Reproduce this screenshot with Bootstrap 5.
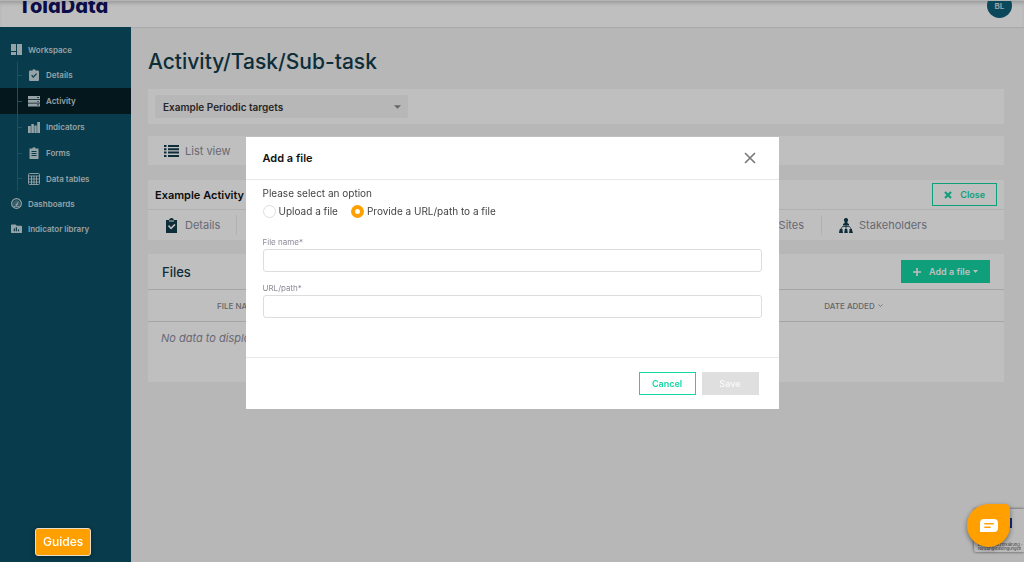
<!DOCTYPE html>
<html lang="en">
<head>
<meta charset="utf-8">
<meta name="viewport" content="width=device-width, initial-scale=1">
<title>TolaData – Activity</title>
<link href="https://cdn.jsdelivr.net/npm/bootstrap@5.3.0/dist/css/bootstrap.min.css" rel="stylesheet">
<style>
:root { --ink:#123c4b; --green:#14d6a5; --orange:#ffa000; --muted:#8c8c9b; }
body { font-family:Inter,"Liberation Sans",sans-serif; font-size:10px; line-height:16px; background:#f4f4f4; color:#222; }
svg { display:block; flex:none; fill:currentColor; }
a { text-decoration:none; color:inherit; }

/* top bar */
.topbar { height:27px; padding:0 12px 0 18px; background:#fff; border-top:1px solid #eef1f0; box-shadow:inset 0 4px 4px -2px #0003, 0 0 2px #0003; overflow:hidden; }
.brand { font-size:20px; font-weight:800; line-height:26px; color:#0f1060; font-feature-settings:"cv11"; margin-top:-8px; }
.avatar { width:25px; height:25px; margin-top:-8px; background:#10617a; font-size:8px; font-weight:600; color:#d5e4ea; }

/* sidebar */
.sidebar { width:131px; background:#0b4f65; color:#c9dade; font-size:8px; font-weight:600; padding-top:10px; }
.side-link { height:25px; padding-left:11px; gap:6px; }
.side-sub { position:relative; }
.side-sub .side-link { height:26px; padding-left:28px; }
.side-sub .side-link:last-child { height:25px; }
.side-sub::before { content:""; position:absolute; left:17px; top:0; bottom:0; width:1px; background:#2b6a7d; }
.side-sub .side-link::before { content:""; position:absolute; left:17px; width:5px; height:1px; background:#2b6a7d; }
.side-link.current { background:#041f27; }

/* content */
.content { padding:23px 20px 0 17px; min-width:0; }
.page-title { font-size:21px; line-height:24px; font-weight:500; color:var(--ink); margin-bottom:15px; }
.panel { background:#fff; }
.select-panel { padding:6px 7px; }
.target-select { width:253px; height:23px; border:0; border-radius:3px; background-color:#f4f4f4; font-size:10px; line-height:16px; font-weight:600; color:#333; padding:0 24px 0 8px;
 background-image:url("data:image/svg+xml,%3Csvg xmlns='http://www.w3.org/2000/svg' viewBox='0 0 8 4'%3E%3Cpath fill='%23888' d='M0 0h8L4 4z'/%3E%3C/svg%3E"); background-size:7px 4px; background-position:right 7px center; }
.view-row { height:29px; margin:12px 0 15px; }
.tab-link { font-size:11px; color:var(--muted); gap:6px; }
.tab-link svg { color:var(--ink); }
.section-panel { margin-bottom:14px; }
.section-row { height:29px; padding:0 7px; }
.section-title { font-size:11px; line-height:16px; color:#111; }
.tabs-row { height:31px; border-top:1px solid #ececec; }
.tab-rule { width:1px; height:20px; background:#ececec; }
.right-tabs { gap:17px; padding-right:77px; }
.btn { border-radius:0; font-size:9px; line-height:14px; font-weight:600; height:23px; padding:0 11px; }
.btn-line { border:1px solid var(--green); color:var(--green); background:transparent; }
.btn-fill { background:var(--green); color:#fff; }
.files-head { height:35px; padding:0 14px; }
.files-title { font-size:13px; line-height:20px; font-weight:500; color:var(--ink); }
.files-table { font-size:8px; font-weight:500; color:#888; margin:0; --bs-table-bg:transparent; }
.files-table th { height:32px; font-weight:500; padding:0; border-top:1px solid #ddd; border-bottom:1px solid #ddd; }
.files-table .col-name { width:79%; padding-left:69px; }
.files-table td { height:60px; padding:8px 13px; border:0; font-size:11px; font-style:italic; font-weight:400; color:var(--muted); }
.sort, .add-text { gap:3px; }

/* dialog */
.modal-backdrop.soft { opacity:.25; }
.modal-dialog.file-dialog { max-width:533px; margin:137px auto 0; }
.file-dialog .modal-content { border:0; border-radius:0; }
.file-dialog .modal-header { height:43px; padding:0 23px 0 17px; border-color:#e8e8e8; border-radius:0; }
.file-dialog .modal-title { font-size:11px; line-height:16px; color:#111; font-weight:600; }
.file-dialog .modal-body { padding:5px 17px 39px; color:#444; }
.file-dialog .modal-footer { height:52px; padding:0 20px 0 17px; gap:6px; border-color:#e8e8e8; }
.file-dialog .modal-footer > * { margin:0; width:57px; padding:0; }
.close-x { border:0; background:none; padding:0; color:#777; }
.options { gap:13px; margin-bottom:14px; }
.option { gap:3px; line-height:20px; }
.option input { appearance:none; width:13px; height:13px; margin:0; border:1px solid #ddd; border-radius:50%; background:#fff; }
.option input:checked { border:4px solid var(--orange); }
.field-group + .field-group { margin-top:9px; }
.field-label { display:block; font-size:8px; line-height:14px; color:var(--muted); }
.field { height:23px; border:1px solid #ddd; border-radius:3px; font-size:10px; padding:2px 8px; }
.btn-off:disabled { background:#dfdfdf; color:#f7f7f7; border:0; opacity:1; }

/* floating items */
.guides { position:fixed; left:35px; bottom:6px; z-index:1070; height:28px; padding:0 7px; border:1px solid #e8dccb; border-radius:3px; background:var(--orange); color:#fff; font-size:12px; font-weight:500; box-shadow:0 1px 4px #0006; }
.chat { position:fixed; right:14px; bottom:15px; z-index:1070; width:43px; height:43px; border:0; border-radius:50% 5px 50% 50%; background:var(--orange); color:#fff; box-shadow:0 2px 5px #0007; }
.captcha { position:fixed; right:0; bottom:10px; width:50px; height:43px; background:#f9f9f9; border-radius:2px 0 0 2px; box-shadow:0 0 3px #555; font-size:4px; line-height:4px; color:#555; padding:34px 0 0 4px; white-space:nowrap; }
.captcha::before { content:""; position:absolute; right:12px; top:9px; width:4px; height:10px; background:#1c3aa9; }
</style>
</head>
<body>
<div class="min-vh-100 d-flex flex-column">
<header class="topbar d-flex justify-content-between align-items-start">
  <a href="#" class="brand">TolaData</a>
  <div class="avatar rounded-circle d-flex align-items-center justify-content-center">BL</div>
</header>
<div class="d-flex flex-grow-1">
  <nav class="sidebar flex-shrink-0" aria-label="Workspace">
    <a href="#" class="side-link d-flex align-items-center"><svg width="11" height="11" viewBox="0 0 11 11"><path d="M0 0h5v7H0zM0 8h5v3H0zM6 0h5v11H6z"/></svg>Workspace</a>
    <div class="side-sub">
      <a href="#" class="side-link d-flex align-items-center"><svg width="12" height="12" viewBox="0 0 12 12"><path fill-rule="evenodd" d="M2 1.500h2.300a1.800 1.800 0 0 1 3.400 0H10q1 0 1 1V11q0 1-1 1H2q-1 0-1-1V2.500q0-1 1-1zM3.200 6.500l2 2.400L9 5l-.8-.8-3 3-1.100-1.500z"/></svg>Details</a>
      <a href="#" class="side-link current d-flex align-items-center" aria-current="page"><svg width="12" height="12" viewBox="0 0 12 12"><path fill-rule="evenodd" d="M0 1h12v3H0zM0 4.700h12v3H0zM0 8.400h12v3H0zM9 2.200v.7h2v-.7zM9 5.900v.7h2v-.7zM9 9.600v.7h2v-.7z"/></svg>Activity</a>
      <a href="#" class="side-link d-flex align-items-center"><svg width="12" height="12" viewBox="0 0 12 12"><path d="M0 5h2.800v7H0zM3.300 3h2.600v9H3.300zM6.400 4.500h2.300V12H6.400zM9.200 1H12v11H9.200z"/></svg>Indicators</a>
      <a href="#" class="side-link d-flex align-items-center"><svg width="12" height="12" viewBox="0 0 12 12"><path fill-rule="evenodd" d="M2 1.500h2.300a1.800 1.800 0 0 1 3.400 0H10.500V12h-9V1.500zM3.500 4v1h5V4zM3.500 6v1h5V6zM3.500 8v1h5V8z"/></svg>Forms</a>
      <a href="#" class="side-link d-flex align-items-center"><svg width="12" height="12" viewBox="0 0 12 12"><path fill="none" stroke="currentColor" d="M1.500.5h9q1 0 1 1v9q0 1-1 1h-9q-1 0-1-1v-9q0-1 1-1zM.5 3h11M.5 6h11M.5 9h11M3.500 3v8.500M6 3v8.500M8.500 3v8.500" stroke-width=".9"/></svg>Data tables</a>
    </div>
    <a href="#" class="side-link d-flex align-items-center"><svg width="11" height="11" viewBox="0 0 12 12"><circle cx="6" cy="6" r="5.300" fill="none" stroke="currentColor" stroke-width="1.300"/><path d="M3 9a4 4 0 1 1 6 0l-1.500-.5a2 2 0 0 0-3 0z" opacity=".35"/><path d="M8.700 3 7 7.700a1.100 1.100 0 1 1-1.500-1zM3 8.600h6v1H3z"/></svg>Dashboards</a>
    <a href="#" class="side-link d-flex align-items-center"><svg width="11" height="11" viewBox="0 0 12 12"><path fill-rule="evenodd" d="M1 1.500h4L6.200 3H11q1 0 1 1v6q0 1-1 1H1q-1 0-1-1V2.500q0-1 1-1zM3 6v3h1.300V6zM5.200 4.500V9h1.300V4.500zM7.500 7v2h1.300V7z"/></svg>Indicator library</a>
  </nav>

  <main class="content flex-grow-1">
    <h1 class="page-title">Activity/Task/Sub-task</h1>
    <div class="panel select-panel d-flex">
      <label class="visually-hidden" for="target">Activity</label>
      <select id="target" class="form-select target-select"><option>Example Periodic targets</option></select>
    </div>
    <div class="panel view-row d-flex align-items-center px-3"><a href="#" class="tab-link d-flex align-items-center"><svg width="15" height="12" viewBox="0 0 15 12"><path d="M0 0h2.500v2H0zM4 0h11v2H4zM0 3.300h2.500v2H0zM4 3.300h11v2H4zM0 6.600h2.500v2H0zM4 6.600h11v2H4zM0 10h2.500v2H0zM4 10h11v2H4z"/></svg>List view</a></div>

    <section class="panel section-panel">
      <div class="section-row d-flex align-items-center justify-content-between">
        <h2 class="section-title fw-semibold m-0">Example Activity</h2>
        <button type="button" class="btn btn-line d-flex align-items-center gap-2"><svg width="8" height="8" viewBox="0 0 8 8"><path d="m1 1 6 6M7 1 1 7" stroke="currentColor" stroke-width="2.200"/></svg>Close</button>
      </div>
      <div class="tabs-row d-flex align-items-center justify-content-between ps-3">
        <div class="d-flex align-items-center gap-3">
          <a href="#" class="tab-link d-flex align-items-center"><svg width="15" height="15" viewBox="0 0 15 15"><path fill-rule="evenodd" d="M2 2h3q.5-2 2.500-2T10 2h3v13H2zM4 8.200l3 3.300L11.500 7l-1-1.200L7 9.200 5 7zM5 2.500v1h5v-1z"/></svg>Details</a>
          <span class="tab-rule"></span>
        </div>
        <div class="right-tabs d-flex align-items-center">
          <a href="#" class="tab-link">Sites</a>
          <span class="tab-rule"></span>
          <a href="#" class="tab-link d-flex align-items-center"><svg width="14" height="15" viewBox="0 0 14 15"><path d="M7 0a2 2 0 0 1 1.600 3.300L8.300 5 10 6v1.500H4V6l1.700-1-.3-1.700A2 2 0 0 1 7 0zM1 11h2.500v1L4 15H0l.5-3zM5.700 11h2.600v1l.5 3H5.200l.5-3zM10.500 11H13v1l1 3h-4l.5-3z"/><path d="M7 7v4M1.500 11.500 3.500 8.500h7l2 3" fill="none" stroke="currentColor" stroke-width=".8"/></svg>Stakeholders</a>
        </div>
      </div>
    </section>

    <section class="panel">
      <div class="files-head d-flex align-items-center justify-content-between">
        <h2 class="files-title m-0">Files</h2>
        <button type="button" class="btn btn-fill d-flex align-items-center gap-2"><svg width="8" height="8" viewBox="0 0 8 8"><path d="M4 0v8M0 4h8" stroke="currentColor" stroke-width="1.600"/></svg><span class="d-flex align-items-center add-text">Add a file<svg width="5" height="3" viewBox="0 0 5 3"><path d="M0 0h5L2.500 3z"/></svg></span></button>
      </div>
      <table class="table files-table">
        <thead><tr><th scope="col" class="col-name align-middle">FILE NAME</th><th scope="col" class="align-middle"><span class="d-flex align-items-center sort">DATE ADDED<svg width="5" height="3" viewBox="0 0 5 3"><path d="m.5.500 2 2 2-2" fill="none" stroke="currentColor" stroke-width=".8"/></svg></span></th></tr></thead>
        <tbody><tr><td colspan="2">No data to display</td></tr></tbody>
      </table>
    </section>
  </main>
</div>
</div>

<aside class="captcha" aria-label="reCAPTCHA">Datenschutzerklärung -<br>Nutzungsbedingungen</aside>
<div class="modal-backdrop soft"></div>

<div class="modal d-block" role="dialog" aria-modal="true" aria-labelledby="dlg-title">
  <div class="modal-dialog file-dialog">
    <form class="modal-content">
      <div class="modal-header">
        <h2 class="modal-title" id="dlg-title">Add a file</h2>
        <button type="button" class="close-x" aria-label="Close"><svg width="12" height="12" viewBox="0 0 12 12"><path d="m1 1 10 10M11 1 1 11" stroke="currentColor" stroke-width="1.600"/></svg></button>
      </div>
      <div class="modal-body">
        <div>Please select an option</div>
        <div class="d-flex options">
          <label class="option d-flex align-items-center"><input type="radio" name="source">Upload a file</label>
          <label class="option d-flex align-items-center"><input type="radio" name="source" checked>Provide a URL/path to a file</label>
        </div>
        <div class="field-group"><label class="field-label" for="fname">File name*</label><input id="fname" type="text" class="form-control field"></div>
        <div class="field-group"><label class="field-label" for="furl">URL/path*</label><input id="furl" type="text" class="form-control field"></div>
      </div>
      <div class="modal-footer">
        <button type="button" class="btn btn-line">Cancel</button>
        <button type="submit" class="btn btn-off" disabled>Save</button>
      </div>
    </form>
  </div>
</div>

<button type="button" class="guides">Guides</button>
<button type="button" class="chat d-flex align-items-center justify-content-center" aria-label="Open chat"><svg width="18" height="13" viewBox="0 0 18 13"><path fill-rule="evenodd" d="M4 0h10q4 0 4 4v5q0 4-4 4H0V4q0-4 4-4zM4.500 4q-.7.700 0 1.400h9q.7-.7 0-1.400zM4.500 7.500q-.7.700 0 1.400h6q.7-.7 0-1.400z"/></svg></button>
<script src="https://cdn.jsdelivr.net/npm/bootstrap@5.3.0/dist/js/bootstrap.bundle.min.js"></script>
</body>
</html>
